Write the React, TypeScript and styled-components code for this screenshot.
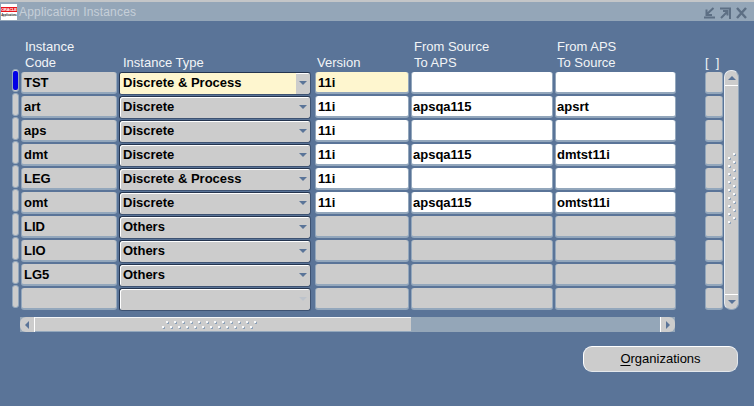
import React from "react";
import styled, { createGlobalStyle } from "styled-components";

const BLUE = "#5a7498";
const GRAY = "#cccccc";
const EDGE = "#93a7bc";
const FONT = `"Liberation Sans", Arial, sans-serif`;

const Global = createGlobalStyle`
  html, body { margin: 0; padding: 0; background: ${BLUE}; }
  body { font-family: ${FONT}; }
`;

const Window = styled.div`
  width: 754px;
  height: 406px;
  background: ${BLUE};
  overflow: hidden;
  display: flex;
  flex-direction: column;
  border-top: 2px solid #c4c6c8;
  box-sizing: border-box;
`;

const TitleBar = styled.div`
  height: 19px;
  flex: none;
  background: #94a6b8;
  display: flex;
  align-items: center;
  padding: 0 7px 0 1px;
`;

const Logo = styled.div`
  width: 16px;
  height: 16px;
  background: #fff;
  display: flex;
  flex-direction: column;
  align-items: center;
  flex: none;
`;
const LogoRed = styled.span`
  margin-top: 3px;
  width: 16px;
  height: 5px;
  background: #e8141c;
  color: #fff;
  font: bold 4px/5px ${FONT};
  letter-spacing: -0.2px;
  text-align: center;
`;
const LogoSub = styled.span`
  margin-top: 1px;
  color: #111;
  font: italic bold 2.6px/5px ${FONT};
  white-space: nowrap;
`;

const Title = styled.div`
  margin-left: 2px;
  flex: 1;
  color: #c6cfd8;
  font: 12px/16px ${FONT};
  letter-spacing: 0.18px;
`;

const WinIcons = styled.div`
  display: flex;
  gap: 5px;
  align-items: center;
  margin-top: 2px;
`;

const Body = styled.div`
  flex: 1;
  display: flex;
  flex-direction: column;
  padding: 16px 16px 0 11px;
`;

const Header = styled.div`
  display: flex;
  height: 34px;
  align-items: flex-end;
  color: #f2f4f7;
  font: 13px/16px ${FONT};
`;

const Head = styled.div<{ $w: number; $ml?: number }>`
  width: ${(p) => p.$w}px;
  margin-left: ${(p) => p.$ml ?? 0}px;
  flex: none;
  white-space: nowrap;
`;

const TableArea = styled.div`
  display: flex;
`;

const Rows = styled.div`
  display: flex;
  flex-direction: column;
`;

const Row = styled.div`
  display: flex;
  height: 24px;
  align-items: center;
`;

const Indicator = styled.div<{ $active?: boolean }>`
  width: 7px;
  height: 23px;
  margin: -2px 2px 0 1px;
  align-self: flex-start;
  box-sizing: border-box;
  padding: 1px;
  display: flex;
  background: ${GRAY};
  border: 1px solid ${EDGE};
  border-radius: 3px;
  flex: none;
  ${(p) =>
    p.$active &&
    `&::before { content: ""; flex: 1; background: #0000e6; border-radius: 2px; }
     padding: 1px 0;`}
`;

const Cell = styled.div<{ $w: number; $bg?: string; $ml?: number; $pad?: number }>`
  width: ${(p) => p.$w}px;
  margin-left: ${(p) => p.$ml ?? 0}px;
  height: 22px;
  flex: none;
  box-sizing: border-box;
  background: ${(p) => p.$bg ?? GRAY};
  border-right: 1px solid ${EDGE};
  border-bottom: 2px solid ${EDGE};
  border-left: 1px solid ${EDGE};
  border-radius: 3px;
  padding: 0 0 0 ${(p) => p.$pad ?? 1}px;
  font: bold 13px/21px ${FONT};
  color: #000;
  white-space: nowrap;
  overflow: hidden;
`;

const Combo = styled.div`
  width: 192px;
  height: 23px;
  margin-left: 2px;
  flex: none;
  box-sizing: border-box;
  display: flex;
  align-items: center;
  background: ${GRAY};
  border: 1px solid #24344e;
  border-right-color: #3d5272;
  border-bottom-color: #3d5272;
  border-radius: 3px;
  box-shadow: inset 1px 1px 0 #fff;
  font: bold 13px/19px ${FONT};
  color: #000;
  overflow: hidden;
`;

const ComboText = styled.div<{ $bg?: string }>`
  flex: 1;
  height: 100%;
  padding-left: 3px;
  background: ${(p) => p.$bg ?? "transparent"};
  white-space: nowrap;
`;

const ComboArrow = styled.div<{ $ghost?: boolean }>`
  width: 14px;
  height: 100%;
  flex: none;
  display: flex;
  align-items: center;
  justify-content: center;
  &::after {
    content: "";
    border-left: 4px solid transparent;
    border-right: 4px solid transparent;
    border-top: 4px solid ${(p) => (p.$ghost ? "#bdc3cb" : BLUE)};
  }
`;

const Flag = styled.div`
  width: 18px;
  height: 22px;
  margin-left: 29px;
  flex: none;
  box-sizing: border-box;
  background: ${GRAY};
  border-right: 1px solid ${EDGE};
  border-bottom: 2px solid ${EDGE};
  border-left: 1px solid ${EDGE};
  border-radius: 3px;
`;

const VScroll = styled.div`
  width: 15px;
  height: 240px;
  margin-left: 1px;
  margin-top: -1px;
  flex: none;
  box-sizing: border-box;
  display: flex;
  flex-direction: column;
  background: ${GRAY};
  border-radius: 7px;
  border-left: 1px solid #e8ecf0;
  border-right: 1px solid ${EDGE};
  border-top: 1px solid #e8ecf0;
  border-bottom: 1px solid ${EDGE};
`;

const VEnd = styled.div<{ $down?: boolean }>`
  height: 14px;
  flex: none;
  display: flex;
  align-items: center;
  justify-content: center;
  ${(p) => (p.$down ? "border-top: 1px solid #fff;" : "border-bottom: 1px solid #fff;")}
  &::after {
    content: "";
    border-left: 4px solid transparent;
    border-right: 4px solid transparent;
    ${(p) => (p.$down ? `border-top: 4px solid ${BLUE};` : `border-bottom: 4px solid ${BLUE};`)}
  }
`;

const VTrack = styled.div`
  flex: 1;
  display: flex;
  align-items: center;
  justify-content: center;
`;

const HScroll = styled.div`
  display: flex;
  width: 655px;
  height: 15px;
  margin-top: 6px;
  margin-left: 9px;
  box-sizing: border-box;
  background: #94a6b8;
`;

const HEnd = styled.div<{ $right?: boolean }>`
  width: 15px;
  flex: none;
  background: ${GRAY};
  display: flex;
  align-items: center;
  justify-content: center;
  box-sizing: border-box;
  ${(p) =>
    p.$right
      ? "border-left: 1px solid #fff; border-radius: 0 6px 6px 0;"
      : "border-right: 1px solid #fff; border-radius: 6px 0 0 6px;"}
  &::after {
    content: "";
    border-top: 4px solid transparent;
    border-bottom: 4px solid transparent;
    ${(p) => (p.$right ? `border-left: 4px solid ${BLUE};` : `border-right: 4px solid ${BLUE};`)}
  }
`;

const HThumb = styled.div`
  width: 376px;
  flex: none;
  background: ${GRAY};
  border-top: 1px solid #f4f6f8;
  border-bottom: 1px solid ${EDGE};
  box-sizing: border-box;
  padding-right: 24px;
  display: flex;
  align-items: center;
  justify-content: center;
`;

const HSpacer = styled.div`
  flex: 1;
`;

const ButtonRow = styled.div`
  display: flex;
  justify-content: flex-end;
  margin-top: 14px;
`;

const Button = styled.button`
  width: 155px;
  height: 26px;
  padding: 0;
  background: ${GRAY};
  border: none;
  border-top: 1px solid #fff;
  border-left: 1px solid #fff;
  border-right: 1px solid #e4e8ec;
  border-bottom: 1px solid #e4e8ec;
  border-radius: 9px;
  color: #000;
  font: 13px/16px ${FONT};
  & u { text-underline-offset: 2px; }
`;

const Dot: React.FC<{ x: number; y: number }> = ({ x, y }) => (
  <>
    <rect x={x + 1} y={y + 1} width="2" height="2" fill="#8ea3ba" />
    <rect x={x} y={y} width="2" height="2" fill="#f8f9fa" />
  </>
);

const Grip: React.FC<{ vertical?: boolean; count: number }> = ({ vertical, count }) => {
  const len = count * 8 + 3;
  const dots = Array.from({ length: count }, (_, i) => i * 8);
  return vertical ? (
    <svg width="8" height={len} viewBox={`0 0 8 ${len}`}>
      {dots.map((d) => (
        <React.Fragment key={d}>
          <Dot x={5} y={d} />
          <Dot x={0} y={d + 4} />
        </React.Fragment>
      ))}
    </svg>
  ) : (
    <svg width={len} height="8" viewBox={`0 0 ${len} 8`}>
      {dots.map((d) => (
        <React.Fragment key={d}>
          <Dot x={d + 4} y={0} />
          <Dot x={d} y={5} />
        </React.Fragment>
      ))}
    </svg>
  );
};

type Item = { code: string; type: string; ver?: string; src?: string; aps?: string; off?: boolean };
const data: Item[] = [
  { code: "TST", type: "Discrete & Process", ver: "11i" },
  { code: "art", type: "Discrete", ver: "11i", src: "apsqa115", aps: "apsrt" },
  { code: "aps", type: "Discrete", ver: "11i" },
  { code: "dmt", type: "Discrete", ver: "11i", src: "apsqa115", aps: "dmtst11i" },
  { code: "LEG", type: "Discrete & Process", ver: "11i" },
  { code: "omt", type: "Discrete", ver: "11i", src: "apsqa115", aps: "omtst11i" },
  { code: "LID", type: "Others", off: true },
  { code: "LIO", type: "Others", off: true },
  { code: "LG5", type: "Others", off: true },
  { code: "", type: "", off: true },
];

export default function App() {
  return (
    <>
      <Global />
      <Window>
        <TitleBar>
          <Logo>
            <LogoRed>ORACLE</LogoRed>
            <LogoSub>Applications</LogoSub>
          </Logo>
          <Title>Application Instances</Title>
          <WinIcons>
            <svg width="11" height="12" viewBox="0 0 11 12" fill="none" stroke="#5d6f84" strokeWidth="2">
              <path d="M0 10.500h11M9.500 1 3 7M2.500 2.500V8H8" />
            </svg>
            <svg width="11" height="12" viewBox="0 0 11 12" fill="none" stroke="#5d6f84" strokeWidth="2">
              <path d="M0 1.500h10V12M1 11l6-6M3 4h4.500v4.500" />
            </svg>
            <svg width="11" height="12" viewBox="0 0 11 12" fill="none" stroke="#5d6f84" strokeWidth="2.400">
              <path d="M1 1l9 10M10 1 1 11" />
            </svg>
          </WinIcons>
        </TitleBar>
        <Body>
          <Header>
            <Head $w={98} $ml={14}>Instance<br />Code</Head>
            <Head $w={194}>Instance Type</Head>
            <Head $w={97}>Version</Head>
            <Head $w={143}>From Source<br />To APS</Head>
            <Head $w={148}>From APS<br />To Source</Head>
            <Head $w={18}>[ &nbsp;]</Head>
          </Header>
          <TableArea>
            <Rows>
              {data.map((d, i) => {
                const first = i === 0;
                return (
                  <Row key={i}>
                    <Indicator $active={first} />
                    <Cell $w={96} $pad={2}>{d.code}</Cell>
                    <Combo>
                      <ComboText $bg={first ? "#fef6cf" : undefined}>{d.type}</ComboText>
                      <ComboArrow $ghost={d.type === ""} />
                    </Combo>
                    <Cell $w={94} $ml={4} $pad={2} $bg={d.off ? GRAY : first ? "#fef6cf" : "#fff"}>{d.ver}</Cell>
                    <Cell $w={142} $ml={2} $bg={d.off ? GRAY : "#fff"}>{d.src}</Cell>
                    <Cell $w={121} $ml={2} $bg={d.off ? GRAY : "#fff"}>{d.aps}</Cell>
                    <Flag />
                  </Row>
                );
              })}
            </Rows>
            <VScroll>
              <VEnd />
              <VTrack><Grip vertical count={9} /></VTrack>
              <VEnd $down />
            </VScroll>
          </TableArea>
          <HScroll>
            <HEnd />
            <HThumb><Grip count={12} /></HThumb>
            <HSpacer />
            <HEnd $right />
          </HScroll>
          <ButtonRow>
            <Button><u>O</u>rganizations</Button>
          </ButtonRow>
        </Body>
      </Window>
    </>
  );
}
